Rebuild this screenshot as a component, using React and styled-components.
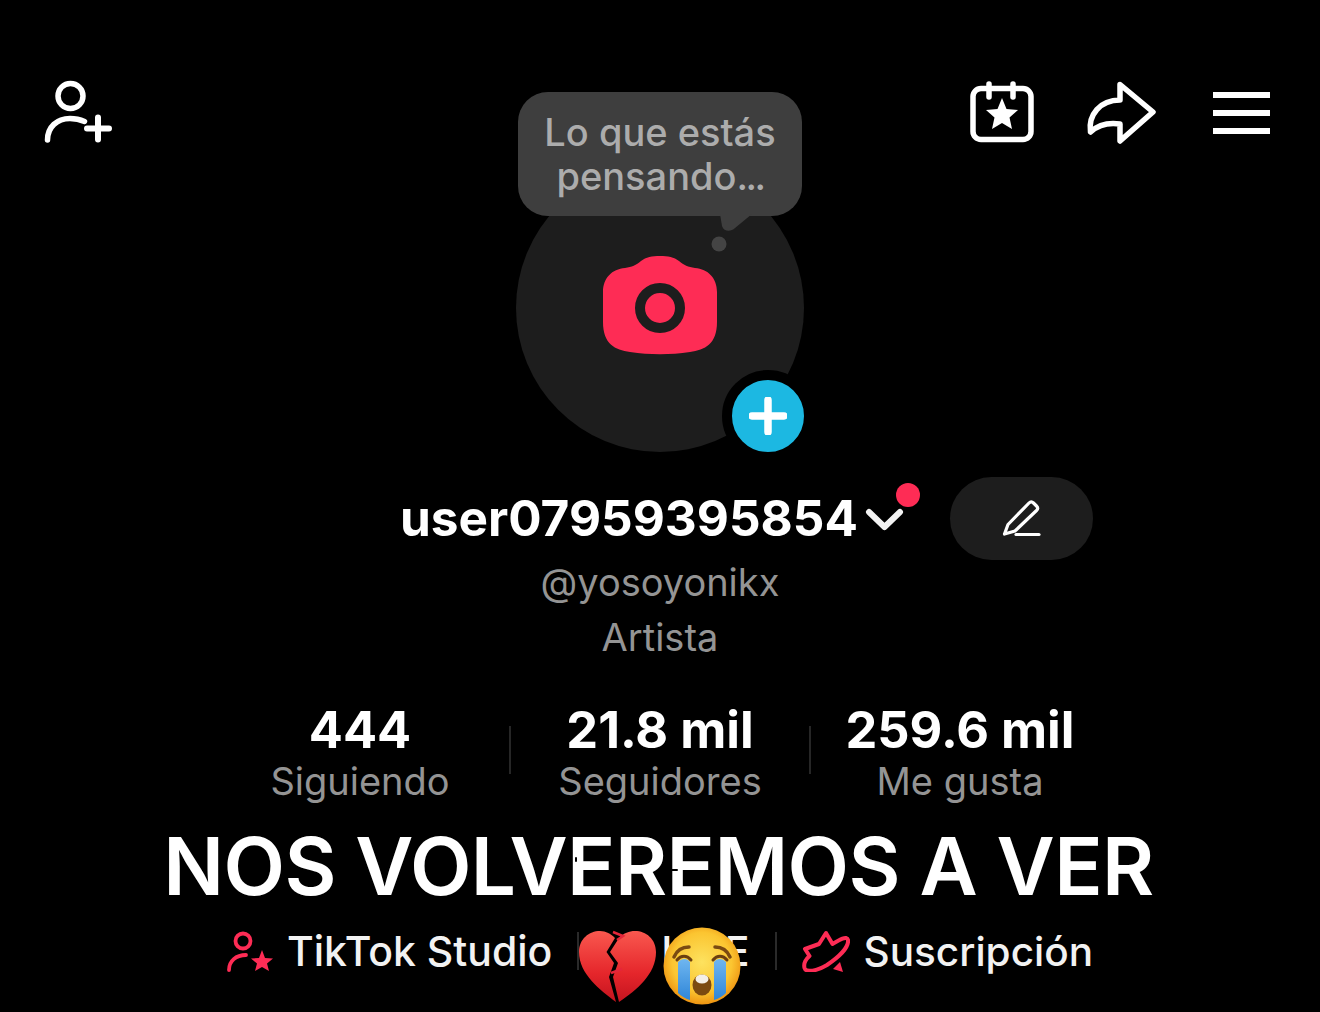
import styled, { createGlobalStyle } from 'styled-components';

const GlobalStyle = createGlobalStyle`
  html, body {
    margin: 0;
    padding: 0;
    background: #000;
  }
  * {
    box-sizing: border-box;
  }
`;

const Page = styled.div`
  width: 1320px;
  height: 1012px;
  overflow: hidden;
  background: #000;
  color: #fff;
  font-family: Inter, 'Noto Sans', 'Liberation Sans', sans-serif;
  display: flex;
  flex-direction: column;
  align-items: center;
`;

const TopBar = styled.header`
  width: 100%;
  height: 164px;
  padding: 79px 48px 0 44px;
  display: flex;
  justify-content: space-between;
  align-items: flex-start;
  svg {
    display: block;
  }
`;

const AvatarWrap = styled.div`
  position: relative;
  width: 288px;
  height: 288px;
  flex: none;
`;

const AvatarCircle = styled.div`
  width: 100%;
  height: 100%;
  border-radius: 50%;
  background: #1d1d1d;
  display: flex;
  align-items: center;
  justify-content: center;
  svg {
    margin-bottom: 6px;
  }
`;

const Bubble = styled.div`
  position: absolute;
  left: 2px;
  top: -72px;
  width: 284px;
  height: 124px;
  border-radius: 30px;
  background: #3e3e3e;
  color: #acacac;
  font-size: 38px;
  font-weight: 500;
  line-height: 44px;
  text-align: center;
  padding-top: 18px;
`;

const Dots = styled.span`
  letter-spacing: -2.5px;
`;

const BubbleTail = styled.svg`
  position: absolute;
  left: 195px;
  top: 50px;
`;

const PlusBadge = styled.div`
  position: absolute;
  left: 206px;
  top: 206px;
  width: 92px;
  height: 92px;
  border-radius: 50%;
  border: 10px solid #000;
  background: #1cb8e2;
  display: flex;
  align-items: center;
  justify-content: center;
`;

const NameRow = styled.div`
  width: 100%;
  height: 83px;
  margin-top: 25px;
  padding-left: 400px;
  display: flex;
  align-items: center;
`;

const UserName = styled.h1`
  margin: 0;
  width: 458px;
  font-size: 49.5px;
  font-weight: 700;
  line-height: 83px;
  white-space: nowrap;
`;

const Chevron = styled.div`
  position: relative;
  width: 92px;
  height: 83px;
  flex: none;
  svg {
    display: block;
  }
`;

const RedDot = styled.span`
  position: absolute;
  left: 38px;
  top: 6px;
  width: 24px;
  height: 24px;
  border-radius: 50%;
  background: #fe2c55;
`;

const EditButton = styled.button`
  width: 143px;
  height: 83px;
  border: 0;
  border-radius: 42px;
  background: #1d1d1d;
  display: flex;
  align-items: center;
  justify-content: center;
  padding: 0;
`;

const Handle = styled.div`
  color: #949494;
  font-size: 38px;
  line-height: 45px;
  margin-bottom: 10px;
`;

const Stats = styled.div`
  margin-top: 32px;
  display: flex;
  align-items: center;
`;

const Stat = styled.div`
  position: relative;
  width: 300px;
  height: 104px;
  display: flex;
  flex-direction: column;
  align-items: center;
`;

const StatDivider = styled.span`
  position: absolute;
  left: -1px;
  top: 24px;
  width: 2px;
  height: 48px;
  background: #262626;
`;

const StatNumber = styled.div`
  font-size: 50.5px;
  font-weight: 700;
  line-height: 56px;
  margin-bottom: 2px;
`;

const StatLabel = styled.div`
  color: #949494;
  font-size: 38px;
  line-height: 42px;
`;

const Overlay = styled.div`
  position: relative;
  width: 100%;
  margin-top: 14px;
  text-align: center;
`;

const Title = styled.h2`
  margin: 0;
  padding-right: 3px;
  font-size: 80px;
  font-weight: 600;
  line-height: 92px;
  letter-spacing: -0.6px;
  white-space: nowrap;
`;

const Specks = styled.svg`
  position: absolute;
  left: 0;
  top: 0;
`;

const Shortcuts = styled.div`
  position: relative;
  width: 100%;
  margin-top: 11px;
  height: 56px;
  display: flex;
  justify-content: center;
  align-items: center;
  gap: 25px;
`;

const Shortcut = styled.div`
  display: flex;
  align-items: center;
  gap: 14px;
  font-size: ${(props) => props.$size || 41}px;
  font-weight: 500;
  color: #f2f2f2;
  white-space: nowrap;
  svg {
    display: block;
    flex: none;
  }
`;

const Sep = styled.span`
  width: 2px;
  height: 38px;
  background: #2a2a2a;
`;

const Emoji = styled.svg`
  position: absolute;
  left: 570px;
  top: 2px;
`;

const App = () => {
  return (
    <Page>
      <GlobalStyle />
      <TopBar>
        <svg width="70" height="66" viewBox="44 79 70 66" fill="none" stroke="#fff" strokeWidth="5.5" strokeLinecap="round">
          <circle cx="70.5" cy="96" r="12.5" />
          <path d="M47.5 140C47.5 127 57 118.500 70 118.500C75 118.500 80 119.500 84.500 121.500" />
          <path d="M87 128.500H109M98 117.500V139.500" strokeWidth="6" />
        </svg>
        <svg width="304" height="66" viewBox="968 79 304 66" fill="none" stroke="#fff" strokeWidth="5.500" strokeLinecap="round" strokeLinejoin="round">
          <rect x="973" y="88.500" width="58" height="51" rx="8" />
          <path d="M989 84V97M1013 84V97" />
          <path
            d="M1002 98L1006.500 109L1018 110L1009.500 117.500L1012 129L1002 123L992 129L994.500 117.500L986 110L997.500 109Z"
            fill="#fff"
            stroke="none"
          />
          <path d="M1120 84.500L1153 112L1120 141V124C1106 122 1097 126 1090.500 132C1088 115 1100 100 1120 100Z" />
          <path d="M1213 95H1270M1213 113H1270M1213 131H1270" strokeWidth="6" strokeLinecap="butt" />
        </svg>
      </TopBar>

      <AvatarWrap>
        <AvatarCircle>
          <svg width="114" height="99" viewBox="603 256 114 99">
            <path
              d="M625 268C632 267 636 265 641 261C646 257 652 256 660 256C668 256 674 257 679 261C684 265 688 267 695 268C708 269 717 278 717 292V322C717 344 705 350 690 352C670 355 650 355 630 352C615 350 603 344 603 322V292C603 278 612 269 625 268Z"
              fill="#fe2c55"
            />
            <circle cx="660" cy="308" r="20" fill="none" stroke="#1d1d1d" strokeWidth="10" />
          </svg>
        </AvatarCircle>
        <Bubble>
          Lo que estás
          <br />
          pensando<Dots>...</Dots>
        </Bubble>
        <BubbleTail width="45" height="40" viewBox="711 214 45 40">
          <path d="M720 214H752L735 228C731 232 724 232 722 226Z" fill="#3e3e3e" />
          <circle cx="719" cy="244" r="7.500" fill="#444" />
        </BubbleTail>
        <PlusBadge>
          <svg width="38" height="38" viewBox="0 0 38 38">
            <path d="M19 3V35M3 19H35" stroke="#fff" strokeWidth="7.500" strokeLinecap="round" />
          </svg>
        </PlusBadge>
      </AvatarWrap>

      <NameRow>
        <UserName>user07959395854</UserName>
        <Chevron>
          <svg width="92" height="83" viewBox="858 477 92 83" fill="none">
            <path d="M869 512L884.500 527L900 512" stroke="#f2f2f2" strokeWidth="6" strokeLinecap="round" strokeLinejoin="round" />
          </svg>
          <RedDot />
        </Chevron>
        <EditButton aria-label="Editar">
          <svg width="40" height="38" viewBox="1002 500 40 38" fill="none" stroke="#fff" strokeWidth="3.200" strokeLinecap="round" strokeLinejoin="round">
            <path d="M1004.500 534L1008 524.500L1029 503C1030.500 501.500 1032 501.500 1033.500 503L1036.500 506C1038 507.500 1038 509 1036.500 510.500L1015 531Z" />
            <path d="M1016 534.500H1039" />
          </svg>
        </EditButton>
      </NameRow>

      <Handle>@yosoyonikx</Handle>
      <Handle>Artista</Handle>

      <Stats>
        <Stat>
          <StatNumber>444</StatNumber>
          <StatLabel>Siguiendo</StatLabel>
        </Stat>
        <Stat>
          <StatDivider />
          <StatNumber>21.8 mil</StatNumber>
          <StatLabel>Seguidores</StatLabel>
        </Stat>
        <Stat>
          <StatDivider />
          <StatNumber>259.6 mil</StatNumber>
          <StatLabel>Me gusta</StatLabel>
        </Stat>
      </Stats>

      <Overlay>
        <Title>NOS VOLVEREMOS A VER</Title>
        <Specks width="1320" height="92" viewBox="0 820 1320 92" stroke="#000" strokeWidth="2" strokeLinecap="round">
          <path d="M600 852H610M645 851L650 855M669 870H677M700 852H706M714 852L718 855M706 880L710 873M755 850L756 852M576 858V861" />
        </Specks>
      </Overlay>

      <Shortcuts>
        <Shortcut>
          <svg width="46" height="42" viewBox="227 931 46 42">
            <g fill="none" stroke="#fe2c55" strokeWidth="3.800" strokeLinecap="round">
              <circle cx="243" cy="942" r="7.500" />
              <path d="M229 971C229 962 236 956 246 956" />
            </g>
            <path
              d="M262 951L265 959L273 959.500L267 964.500L269 972L262 968L255 972L257 964.500L251 959.500L259 959Z"
              fill="#fe2c55"
            />
          </svg>
          TikTok Studio
        </Shortcut>
        <Sep />
        <Shortcut>
          <svg width="43" height="42" viewBox="0 0 43 42" fill="none">
            <circle cx="21" cy="21" r="8" fill="#fe2c55" />
          </svg>
          LIVE
        </Shortcut>
        <Sep />
        <Shortcut $size={40.5}>
          <svg width="48" height="42" viewBox="801 931 48 42">
            <path
              d="M804 950L818 945L825 934L831.500 945C838 941 846 936 847 941C848 948 838 958 826 966C816 972 805 974 803.500 969C802.500 965 804 961 808.500 957Z"
              fill="none"
              stroke="#fe2c55"
              strokeWidth="4"
              strokeLinejoin="round"
            />
            <path d="M839 963L842 973L832 970Z" fill="#fe2c55" />
          </svg>
          Suscripción
        </Shortcut>
        <Emoji width="180" height="84" viewBox="570 925 180 84">
          <defs>
            <linearGradient id="heartFill" x1="0" y1="0" x2="0" y2="1">
              <stop offset="0" stopColor="#f9584f" />
              <stop offset="0.6" stopColor="#e5262b" />
              <stop offset="1" stopColor="#c4141f" />
            </linearGradient>
            <radialGradient id="faceFill" cx="0.5" cy="0.45" r="0.55">
              <stop offset="0" stopColor="#fde25f" />
              <stop offset="0.7" stopColor="#fbc531" />
              <stop offset="1" stopColor="#ee9412" />
            </radialGradient>
            <linearGradient id="tearFill" x1="0" y1="0" x2="0" y2="1">
              <stop offset="0" stopColor="#6fb6f0" />
              <stop offset="1" stopColor="#2f86d8" />
            </linearGradient>
          </defs>
          <path
            d="M616 1002C600 990 579 974 579 952C579 939 589 931 600 931C606 931 611 934 615 938L606.500 952L614 963L609 977Z"
            fill="url(#heartFill)"
          />
          <path
            d="M619 1002C637 990 656 974 656 952C656 939 646 931 635 931C629 931 624 933 619 938L610 952L618 963L613 977Z"
            fill="url(#heartFill)"
          />
          <path d="M613 932L623 936L617 940" fill="none" stroke="#e5263a" strokeWidth="2.500" />
          <path d="M611 973L622 969" stroke="#e5263a" strokeWidth="2.500" />
          <circle cx="702" cy="966" r="38.500" fill="url(#faceFill)" />
          <path d="M674 957C677 950 683 947 689 947M730 957C727 950 721 947 715 947" fill="none" stroke="#7a4a12" strokeWidth="3.500" strokeLinecap="round" />
          <path d="M678 962C682 958 687 958 690 962V1000C686 999 681 996 678 993Z" fill="url(#tearFill)" />
          <path d="M714 962C717 958 722 958 726 962V993C723 996 718 999 714 1000Z" fill="url(#tearFill)" />
          <path d="M677 960C681 955 687 955 691 960M713 960C717 955 723 955 727 960" fill="none" stroke="#6b3f10" strokeWidth="3" strokeLinecap="round" />
          <ellipse cx="702" cy="985" rx="9.500" ry="10.500" fill="#7c4a10" />
          <ellipse cx="702" cy="979" rx="6.500" ry="4.500" fill="#f4efe6" />
        </Emoji>
      </Shortcuts>
    </Page>
  );
};

export default App;
